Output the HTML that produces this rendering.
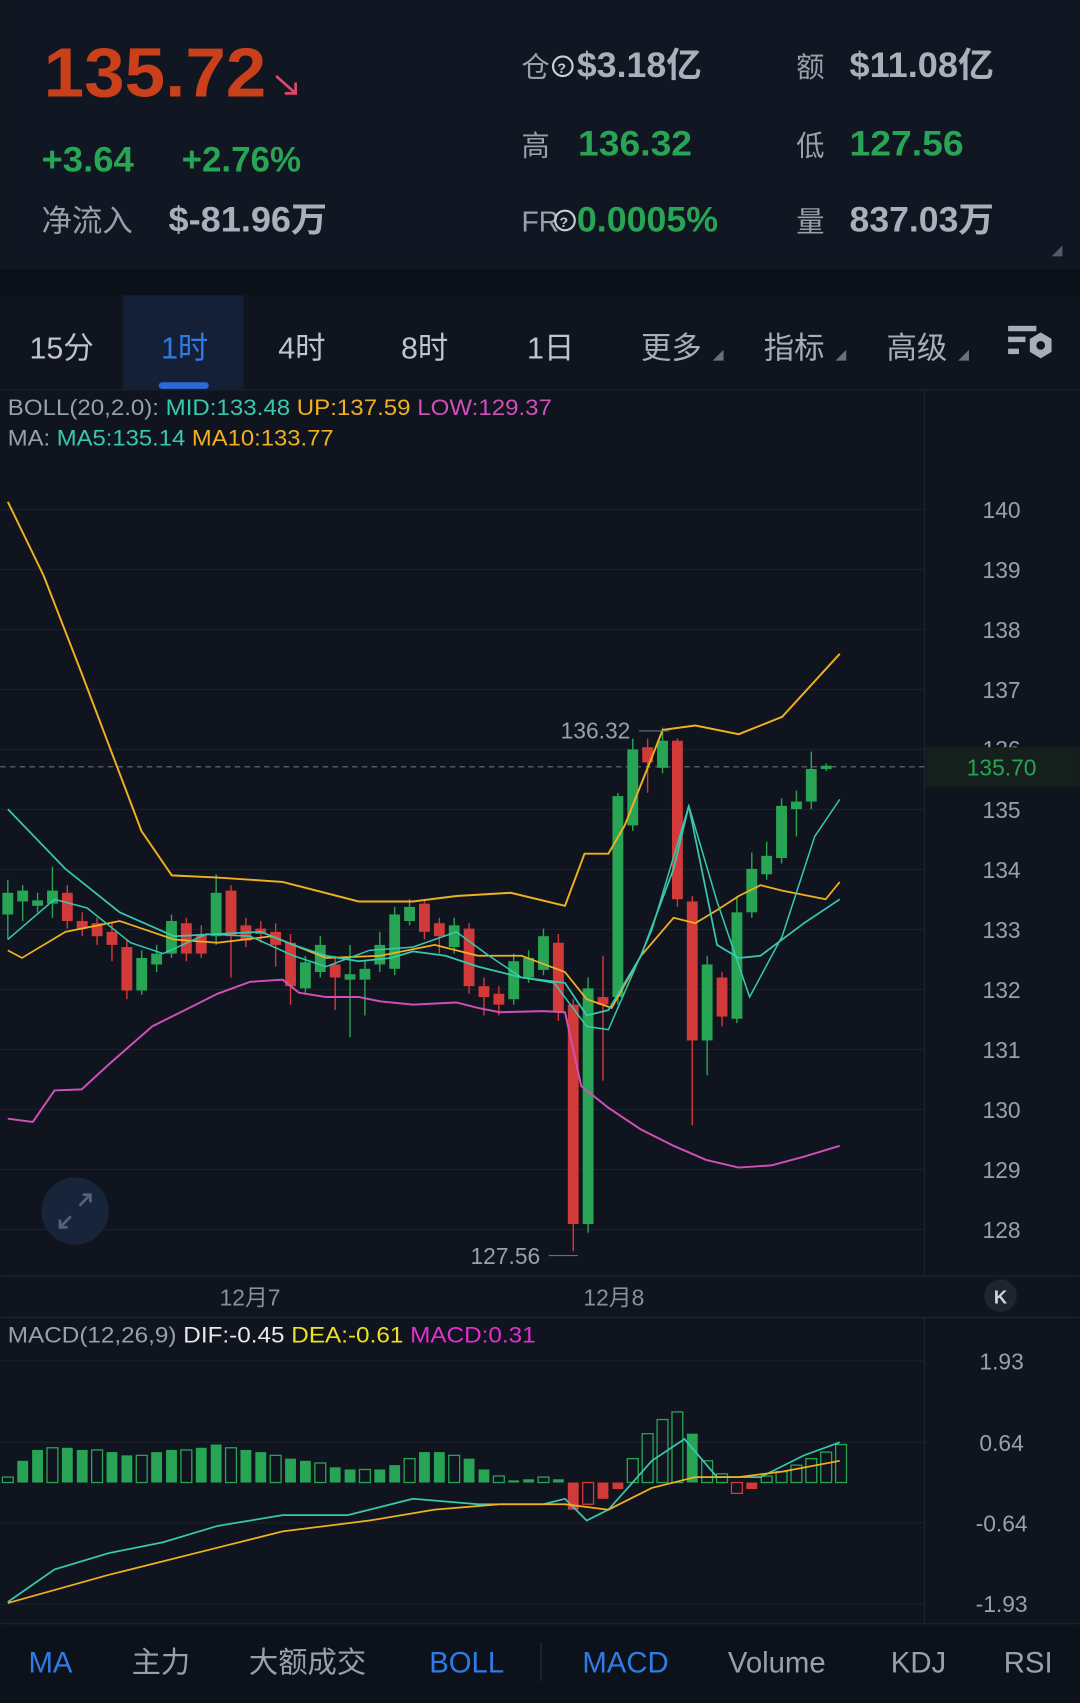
<!DOCTYPE html>
<html><head><meta charset="utf-8"><style>
html,body{margin:0;padding:0;background:#0f141e;width:1080px;height:1703px;overflow:hidden}
svg{display:block}
text{font-family:"Liberation Sans","Noto Sans CJK SC",sans-serif}
</style></head><body>
<svg id="s" width="1080" height="1703" viewBox="0 0 994 1568" xmlns="http://www.w3.org/2000/svg">
<rect width="994" height="1568" fill="#0f141e"/>
<rect y="0" width="994" height="248" fill="#111722"/>
<rect y="248" width="994" height="24" fill="#0c1018"/>
<rect x="113" y="272" width="111" height="86" fill="#152036"/>
<rect x="146" y="352" width="46" height="6" rx="3" fill="#2a6bd8"/>
<line x1="0" y1="359" x2="994" y2="359" stroke="#1e2430"/>
<text x="40" y="89" font-size="64" font-weight="bold" fill="#c9401a" textLength="205" lengthAdjust="spacingAndGlyphs">135.72</text>
<path d="M254 70 L272 86 M262 86 H272 V76" stroke="#e0486a" stroke-width="2.5" fill="none"/>
<text x="38" y="158" font-size="32" font-weight="bold" fill="#27a554" textLength="85" lengthAdjust="spacingAndGlyphs">+3.64</text>
<text x="167" y="158" font-size="32" font-weight="bold" fill="#27a554" textLength="110" lengthAdjust="spacingAndGlyphs">+2.76%</text>
<text x="38" y="213" font-size="28" fill="#9aa0ab">净流入</text>
<text x="155" y="213" font-size="32" font-weight="bold" fill="#aab0bb" textLength="146" lengthAdjust="spacingAndGlyphs">$-81.96万</text>
<text x="480" y="71" font-size="26" fill="#9aa0ab">仓</text>
<circle cx="518" cy="61" r="9" stroke="#c8ccd4" stroke-width="2" fill="none"/><text x="513" y="67" font-size="13" font-weight="bold" fill="#c8ccd4">?</text>
<text x="531" y="71" font-size="32" font-weight="bold" fill="#aab0bb" textLength="115" lengthAdjust="spacingAndGlyphs">$3.18亿</text>
<text x="733" y="71" font-size="26" fill="#9aa0ab">额</text>
<text x="782" y="71" font-size="32" font-weight="bold" fill="#aab0bb" textLength="133" lengthAdjust="spacingAndGlyphs">$11.08亿</text>
<text x="480" y="143" font-size="26" fill="#9aa0ab">高</text>
<text x="532" y="143" font-size="32" font-weight="bold" fill="#27a554" textLength="105" lengthAdjust="spacingAndGlyphs">136.32</text>
<text x="733" y="143" font-size="26" fill="#9aa0ab">低</text>
<text x="782" y="143" font-size="32" font-weight="bold" fill="#27a554" textLength="105" lengthAdjust="spacingAndGlyphs">127.56</text>
<text x="480" y="213" font-size="26" fill="#9aa0ab">FR</text>
<circle cx="520" cy="203" r="9" stroke="#c8ccd4" stroke-width="2" fill="none"/><text x="515" y="209" font-size="13" font-weight="bold" fill="#c8ccd4">?</text>
<text x="531" y="213" font-size="32" font-weight="bold" fill="#27a554" textLength="130" lengthAdjust="spacingAndGlyphs">0.0005%</text>
<text x="733" y="213" font-size="26" fill="#9aa0ab">量</text>
<text x="782" y="213" font-size="32" font-weight="bold" fill="#aab0bb" textLength="133" lengthAdjust="spacingAndGlyphs">837.03万</text>
<path d="M978 226 L978 236 L968 236Z" fill="#555b66"/>
<g font-size="28" fill="#c0c4cc">
<text x="27" y="330">15分</text>
<text x="148" y="330" fill="#2f7be8">1时</text>
<text x="256" y="330">4时</text>
<text x="369" y="330">8时</text>
<text x="485" y="330">1日</text>
<text x="590" y="330" fill="#a8adb6">更多</text>
<text x="703" y="330" fill="#a8adb6">指标</text>
<text x="816" y="330" fill="#a8adb6">高级</text>
</g>
<path d="M666 322 V332 H656Z M779 322 V332 H769Z M892 322 V332 H882Z" fill="#6a707a"/>
<g fill="#a8adb6"><rect x="928" y="300" width="26" height="5"/><rect x="928" y="310" width="16" height="5"/><rect x="928" y="321" width="10" height="5"/></g>
<path d="M958 306 L968 312 V324 L958 330 L948 324 V312Z" fill="#a8adb6"/><circle cx="958" cy="318" r="4" fill="#0f141e"/>
<text x="7" y="382" font-size="20" fill="#9aa0ab" textLength="501" lengthAdjust="spacingAndGlyphs">BOLL(20,2.0): <tspan fill="#38c8b0">MID:133.48</tspan> <tspan fill="#f0b020">UP:137.59</tspan> <tspan fill="#d050b8">LOW:129.37</tspan></text>
<text x="7" y="410" font-size="20" fill="#9aa0ab" textLength="300" lengthAdjust="spacingAndGlyphs">MA: <tspan fill="#38c8b0">MA5:135.14</tspan> <tspan fill="#f0b020">MA10:133.77</tspan></text>
<line x1="851" y1="359" x2="851" y2="1175" stroke="#1e2430"/>
<line x1="851" y1="1213" x2="851" y2="1495" stroke="#1e2430"/>
<line x1="0" y1="1175" x2="994" y2="1175" stroke="#1e2430"/>
<line x1="0" y1="1213" x2="994" y2="1213" stroke="#1e2430"/>
<g id="grid" stroke="#1c222d" stroke-width="1"></g>
<g font-size="21" fill="#9aa0ab" text-anchor="middle" id="axis"></g>
<rect x="852" y="688" width="142" height="36" fill="#15201c"/>
<line x1="0" y1="706" x2="851" y2="706" stroke="#6a707a" stroke-dasharray="5,4"/>
<text x="922" y="714" font-size="21" fill="#27a554" text-anchor="middle">135.70</text>
<g id="candles"></g>
<g id="lines" fill="none" stroke-width="1.8"></g>
<text x="516" y="680" font-size="21" fill="#9aa0ab">136.32</text><line x1="588" y1="673" x2="616" y2="673" stroke="#6a707a"/>
<text x="433" y="1164" font-size="21" fill="#9aa0ab">127.56</text><line x1="505" y1="1156" x2="532" y2="1156" stroke="#6a707a"/>
<circle cx="69" cy="1115" r="31" fill="#17243a"/>
<path d="M73 1110 L83 1100 M76 1100 H83 V1107 M65 1120 L55 1130 M55 1123 V1130 H62" stroke="#51647f" stroke-width="2.5" fill="none"/>
<text x="230" y="1202" font-size="21" fill="#8a909b" text-anchor="middle">12月7</text>
<text x="565" y="1202" font-size="21" fill="#8a909b" text-anchor="middle">12月8</text>
<circle cx="921" cy="1193" r="15" fill="#1e2530"/>
<text x="921" y="1200" font-size="17" font-weight="bold" fill="#d0d4da" text-anchor="middle">K</text>
<text x="7" y="1236" font-size="20" fill="#9aa0ab" textLength="486" lengthAdjust="spacingAndGlyphs">MACD(12,26,9) <tspan fill="#e8e8e8">DIF:-0.45</tspan> <tspan fill="#f0e020">DEA:-0.61</tspan> <tspan fill="#e030d0">MACD:0.31</tspan></text>
<g id="macd"></g>
<rect y="1495" width="994" height="73" fill="#0d121a"/>
<line x1="0" y1="1495" x2="994" y2="1495" stroke="#1e2430"/>
<line x1="498" y1="1512" x2="498" y2="1548" stroke="#2a303a"/>
<g font-size="27" fill="#9aa0ab">
<text x="26" y="1540" fill="#2f7be8">MA</text>
<text x="121" y="1540">主力</text>
<text x="229" y="1540">大额成交</text>
<text x="395" y="1540" fill="#2f7be8">BOLL</text>
<text x="536" y="1540" fill="#2f7be8">MACD</text>
<text x="670" y="1540">Volume</text>
<text x="820" y="1540">KDJ</text>
<text x="924" y="1540">RSI</text>
</g>
</svg>
<script>
var NS="http://www.w3.org/2000/svg";
function el(p,t,a){var e=document.createElementNS(NS,t);for(var k in a)e.setAttribute(k,a[k]);document.getElementById(p).appendChild(e);return e;}
var labs=[140,139,138,137,136,135,134,133,132,131,130,129,128];
labs.forEach(function(p,i){var y=469+i*55.25;el("grid","line",{x1:0,x2:851,y1:y,y2:y});if(p!=136){var t=el("axis","text",{x:922,y:y+8});t.textContent=p;}});
var t=el("axis","text",{x:922,y:697});t.textContent="136";
[1253,1328,1402,1477].forEach(function(y){el("grid","line",{x1:0,x2:851,y1:y,y2:y});});
[["1.93",1261],["0.64",1336],["-0.64",1410],["-1.93",1484]].forEach(function(a){var t=el("axis","text",{x:922,y:a[1]});t.textContent=a[0];});
var G="#27a554",R="#d23a3a";
var c=[[G,822,842,810,865],[G,820,830,815,848],[G,829,834,822,840],[G,820,832,798,845],[R,822,848,815,855],[R,848,855,840,862],[R,850,862,845,870],[R,858,870,850,885],[R,872,912,865,920],[G,882,912,875,916],[G,878,888,870,895],[G,848,878,842,882],[R,850,878,845,885],[R,860,878,852,882],[G,822,862,805,870],[R,820,862,815,900],[R,852,866,845,872],[R,855,860,848,868],[R,858,870,850,890],[R,868,908,860,925],[G,886,910,880,915],[G,870,895,862,900],[R,888,900,880,930],[G,897,902,870,955],[G,892,902,885,935],[G,870,888,858,895],[G,842,892,835,898],[G,835,848,828,852],[R,832,858,828,865],[R,850,862,845,878],[G,852,872,845,878],[R,855,908,850,915],[R,908,918,900,935],[R,915,925,908,935],[G,885,920,878,925],[G,882,900,875,905],[G,862,893,855,898],[R,868,932,860,940],[R,925,1127,920,1152],[G,910,1127,900,1135],[R,918,925,880,995],[G,733,918,730,925],[G,690,760,680,765],[R,688,702,680,730],[G,682,707,670,712],[R,682,828,680,835],[R,830,958,825,1036],[G,888,958,880,990],[R,900,936,895,945],[G,840,938,825,942],[G,800,840,785,845],[G,788,805,775,810],[G,742,790,735,795],[G,738,745,728,770],[G,708,738,692,745],[G,705,708,703,710]];
c.forEach(function(d,i){var x=7+i*13.7;el("candles","line",{x1:x,x2:x,y1:d[3],y2:d[4],stroke:d[0],"stroke-width":1.3});el("candles","rect",{x:x-5,y:d[1],width:10,height:Math.max(2,d[2]-d[1]),fill:d[0]});});
function pl(g,pts,col,w){el(g,"polyline",{points:pts,stroke:col,"stroke-width":w||1.8,fill:"none"});}
pl("lines","7,462 40,530 75,620 130,765 158,806 200,808 260,812 330,830 380,830 420,825 470,822 520,834 538,786 560,786 575,760 610,672 640,668 680,676 720,660 773,602","#f0b020");
pl("lines","7,1030 30,1033 50,1004 75,1003 100,980 140,945 170,930 200,915 230,904 260,902 275,914 300,918 330,918 350,922 380,925 420,923 440,928 460,932 500,931 520,932 535,1000 560,1020 590,1040 620,1055 650,1068 680,1075 710,1073 740,1065 773,1055","#d050b8");
pl("lines","7,875 20,882 60,858 110,848 160,865 200,868 250,862 300,882 350,880 400,870 440,880 480,880 520,895 540,920 563,928 590,880 620,845 640,850 660,838 680,825 700,815 720,820 760,828 773,812","#f0b020",1.6);
pl("lines","7,745 60,800 110,840 160,862 200,860 240,858 270,870 300,880 330,885 360,882 380,876 410,880 440,890 480,900 520,905 540,935 560,930 590,880 620,800 634,742 660,870 680,882 700,880 740,850 773,828","#38c8b0",1.6);
pl("lines","7,865 50,828 80,836 120,868 150,878 190,860 230,862 270,880 300,890 340,875 380,872 420,858 450,880 480,900 510,905 540,945 560,948 600,856 634,742 660,830 690,918 720,862 750,770 773,736","#38c8b0",1.4);
var h=[5,20,30,32,32,30,30,28,25,25,28,30,30,32,35,32,30,28,25,22,20,18,14,12,12,12,16,22,28,28,25,22,12,6,2,3,5,3,-25,-20,-15,-6,22,45,58,65,45,20,8,-10,-6,6,10,16,22,28,35];
h.forEach(function(v,i){var x=7+i*13.7;var col=v<0?R:G;var filled=(i%3!=0)&&i<42||v<0&&i%2==0||i==46;var y=v<0?1365:1365-v;
var a={x:x-5,y:y,width:10,height:Math.max(2,Math.abs(v))};if(filled)a.fill=col;else{a.fill="none";a.stroke=col;a["stroke-width"]=1.2;}el("macd","rect",a);});
pl("macd","7,1475 50,1445 100,1430 150,1420 200,1405 260,1395 320,1395 380,1380 440,1385 500,1385 520,1380 540,1400 560,1390 600,1345 630,1325 660,1360 700,1360 740,1340 773,1328","#38c8b0",1.6);
pl("macd","7,1476 100,1450 200,1425 260,1410 340,1400 400,1390 460,1385 520,1385 560,1390 600,1370 640,1360 680,1360 720,1355 773,1345","#f0b020",1.6);
</script>
</body></html>
